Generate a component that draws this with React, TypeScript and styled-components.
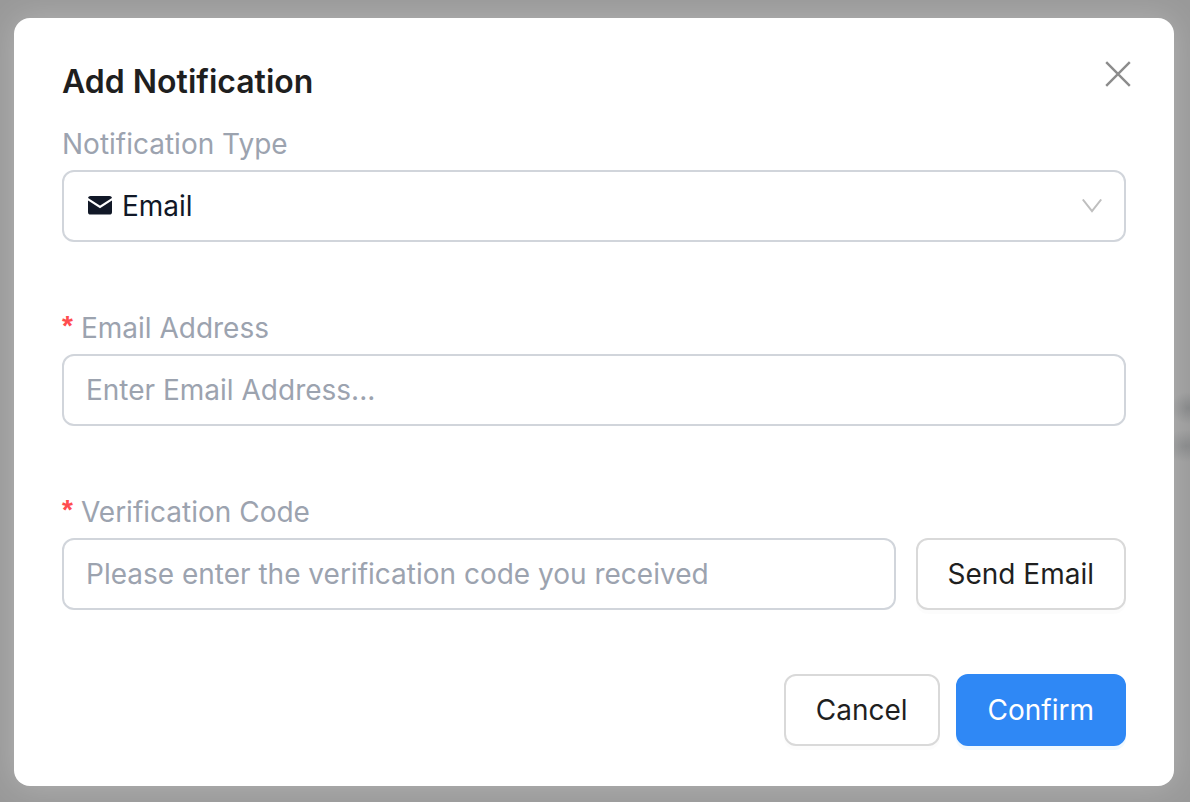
import React from 'react';
import styled, { createGlobalStyle } from 'styled-components';

const GlobalStyle = createGlobalStyle`
  * { box-sizing: border-box; }
  body {
    margin: 0;
    background: #999;
    font-family: Inter, "Liberation Sans", sans-serif;
    font-size: 28px;
    line-height: 44px;
    color: #1f1f1f;
  }
  button, input, select { font: inherit; color: inherit; }
`;

const Backdrop = styled.div`
  min-height: 100vh;
  padding: 18px 16px 16px 14px;
  overflow: hidden;
  background:
    radial-gradient(ellipse 18px 16px at calc(100% - 2px) 408px, rgba(75, 80, 84, 0.3), transparent),
    radial-gradient(ellipse 26px 16px at calc(100% - 4px) 446px, rgba(75, 80, 84, 0.28), transparent),
    #999;
`;

const Dialog = styled.form`
  display: flex;
  flex-direction: column;
  gap: 64px;
  padding: 40px 48px;
  border-radius: 16px;
  background: #fff;
  box-shadow: 0 0 32px rgba(255, 255, 255, 0.26);
`;

const Top = styled.div`
  display: flex;
  flex-direction: column;
  gap: 16px;
`;

const Header = styled.header`
  display: flex;
  align-items: flex-start;
  justify-content: space-between;
`;

const Title = styled.h1`
  margin: 0;
  font-size: 32px;
  font-weight: 600;
  line-height: 48px;
`;

const CloseButton = styled.button`
  display: flex;
  align-items: center;
  justify-content: center;
  width: 32px;
  height: 32px;
  margin-right: -8px;
  padding: 0;
  border: 0;
  background: none;
  color: #8c8c8c;
  cursor: pointer;
`;

const Field = styled.div`
  display: flex;
  flex-direction: column;
  gap: 4px;
`;

const Label = styled.label`
  display: flex;
  gap: 8px;
  color: #9ca3af;
`;

const Required = styled.span`
  color: #ff4d4f;
  font-family: "Liberation Sans", sans-serif;
  font-weight: 700;
  line-height: 40px;
`;

const SelectBox = styled.div`
  display: flex;
  align-items: center;
  gap: 8px;
  height: 72px;
  padding: 0 22px;
  border: 2px solid #d1d5db;
  border-radius: 12px;
  color: #111827;
`;

const Select = styled.select`
  flex: 1;
  min-width: 0;
  height: 44px;
  padding: 0;
  border: 0;
  outline: 0;
  appearance: none;
  background: none;
`;

const Input = styled.input`
  flex: 1 0 72px;
  min-width: 0;
  width: 100%;
  height: 72px;
  padding: 0 22px;
  border: 2px solid #d1d5db;
  border-radius: 12px;
  outline: 0;
  background: #fff;
  &::placeholder { color: #9ca3af; opacity: 1; }
`;

const CodeRow = styled.div`
  display: flex;
  gap: 20px;
`;

const Button = styled.button<{ $primary?: boolean }>`
  flex: none;
  height: 72px;
  padding: 0 30px;
  border: 2px solid ${(p) => (p.$primary ? '#2f88f5' : '#d9d9d9')};
  border-radius: 12px;
  background: ${(p) => (p.$primary ? '#2f88f5' : '#fff')};
  color: ${(p) => (p.$primary ? '#fff' : '#1f1f1f')};
  box-shadow: 0 4px 0 ${(p) => (p.$primary ? 'rgba(5, 145, 255, 0.06)' : 'rgba(0, 0, 0, 0.01)')};
  cursor: pointer;
`;

const Footer = styled.footer`
  display: flex;
  justify-content: flex-end;
  gap: 16px;
`;

const CloseIcon = () => (
  <svg width="26" height="26" viewBox="0 0 26 26" fill="none" stroke="currentColor" strokeWidth="2.4" aria-hidden="true">
    <path d="M1.2 1.2L24.8 24.8M24.8 1.2L1.2 24.8" />
  </svg>
);

const MailIcon = () => (
  <svg width="28" height="28" viewBox="0 0 28 28" aria-hidden="true">
    <rect x="2" y="4" width="24" height="18.6" rx="2.6" fill="currentColor" />
    <path d="M1.5 6.9L14 14.9L26.5 6.9" fill="none" stroke="#fff" strokeWidth="2.2" />
  </svg>
);

const ChevronIcon = () => (
  <svg width="20" height="14" viewBox="0 0 20 14" fill="none" stroke="#bfbfbf" strokeWidth="2" aria-hidden="true">
    <path d="M0.8 0.5L10 12.2L19.2 0.5" />
  </svg>
);

export default function App() {
  return (
    <>
      <GlobalStyle />
      <Backdrop>
        <Dialog role="dialog" aria-labelledby="dialog-title" onSubmit={(e: React.FormEvent) => e.preventDefault()}>
          <Top>
            <Header>
              <Title id="dialog-title">Add Notification</Title>
              <CloseButton type="button" aria-label="Close"><CloseIcon /></CloseButton>
            </Header>
            <Field>
              <Label htmlFor="type">Notification Type</Label>
              <SelectBox>
                <MailIcon />
                <Select id="type" defaultValue="email">
                  <option value="email">Email</option>
                </Select>
                <ChevronIcon />
              </SelectBox>
            </Field>
          </Top>
          <Field>
            <Label htmlFor="email"><Required>*</Required>Email Address</Label>
            <Input id="email" type="email" placeholder="Enter Email Address..." />
          </Field>
          <Field>
            <Label htmlFor="code"><Required>*</Required>Verification Code</Label>
            <CodeRow>
              <Input id="code" type="text" placeholder="Please enter the verification code you received" />
              <Button type="button">Send Email</Button>
            </CodeRow>
          </Field>
          <Footer>
            <Button type="button">Cancel</Button>
            <Button type="submit" $primary>Confirm</Button>
          </Footer>
        </Dialog>
      </Backdrop>
    </>
  );
}
